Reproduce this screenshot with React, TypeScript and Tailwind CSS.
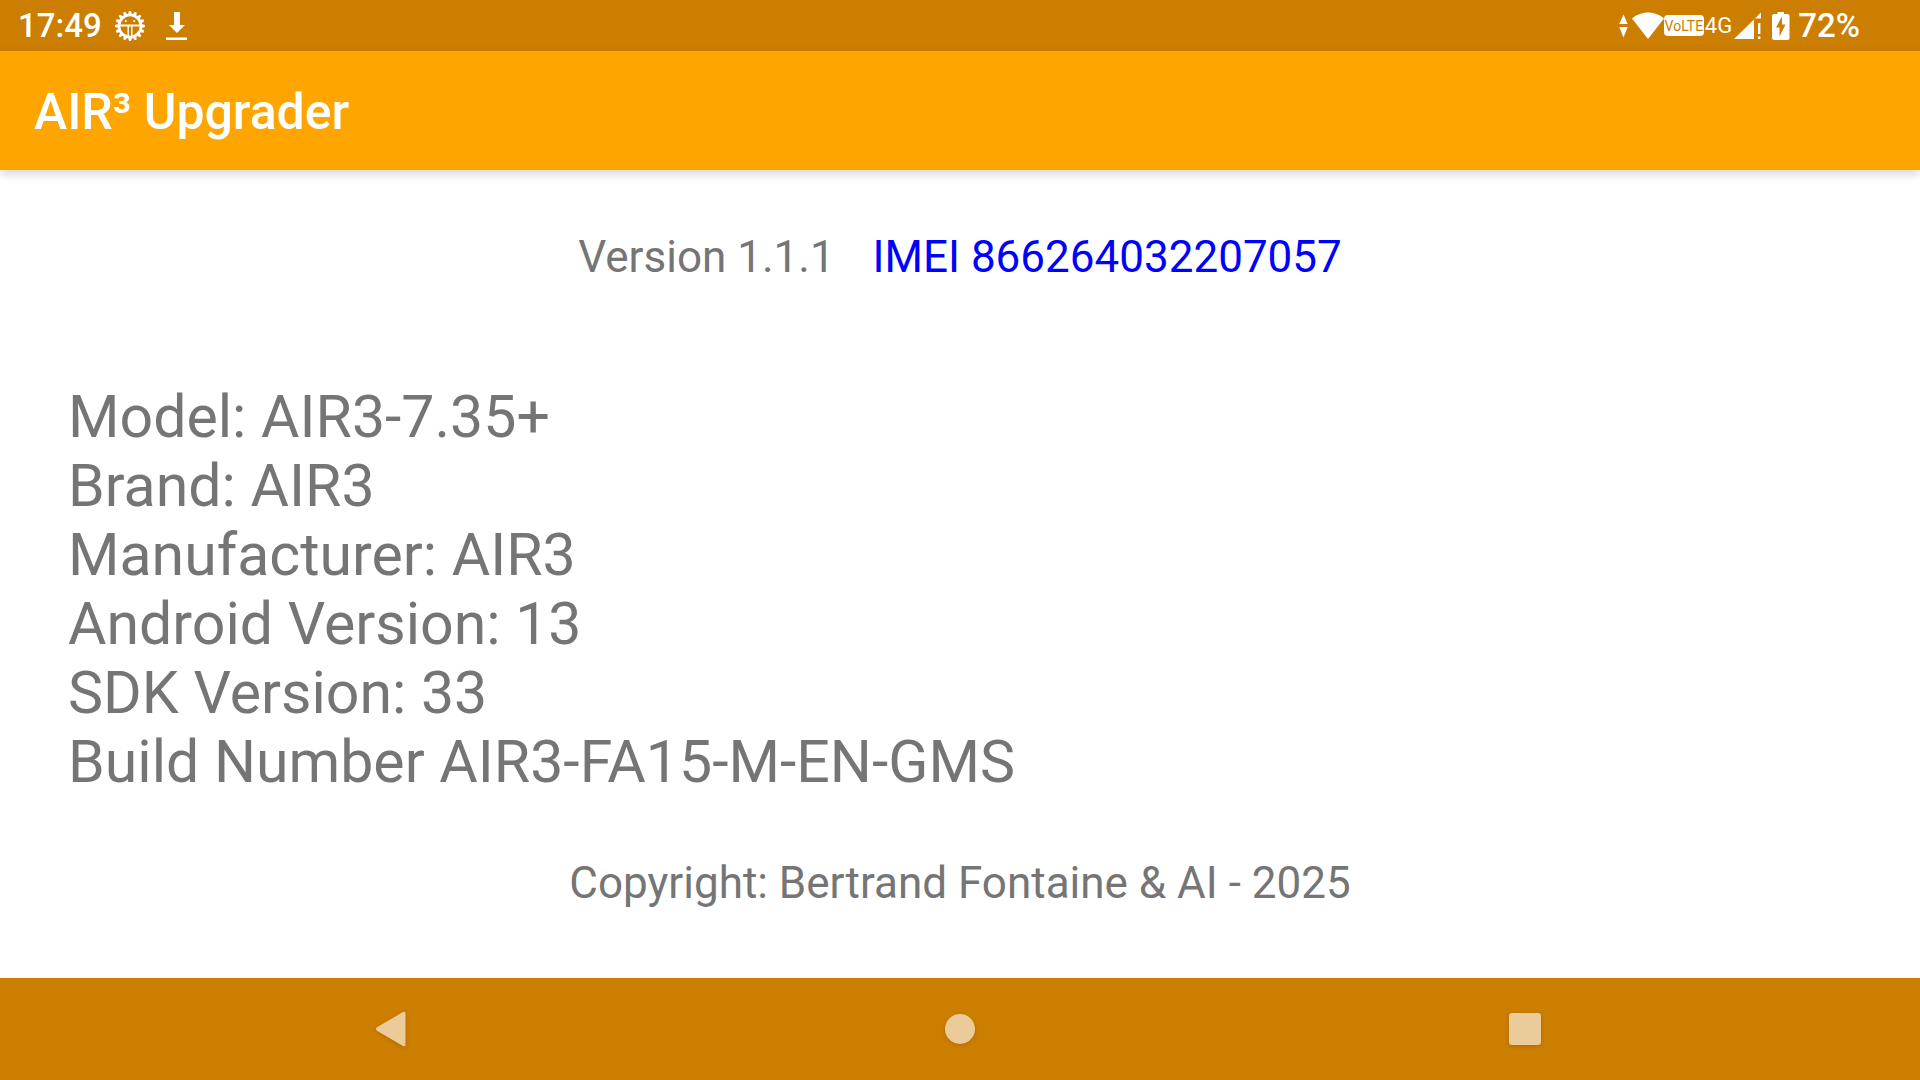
import type { ReactNode } from "react";

interface DeviceField {
  label: string;
  value: string;
}

const deviceFields: DeviceField[] = [
  { label: "Model:", value: "AIR3-7.35+" },
  { label: "Brand:", value: "AIR3" },
  { label: "Manufacturer:", value: "AIR3" },
  { label: "Android Version:", value: "13" },
  { label: "SDK Version:", value: "33" },
  { label: "Build Number", value: "AIR3-FA15-M-EN-GMS" },
];

const gearTeeth = Array.from({ length: 16 }, (_, i) => i * 22.5);

function GearIcon() {
  return (
    <svg width="32" height="32" viewBox="0 0 32 32" fill="none" stroke="white">
      {gearTeeth.map((angle) => (
        <path
          key={angle}
          d="M13.8 5 L15 1 H17 L18.2 5 Z"
          fill="white"
          stroke="none"
          transform={`rotate(${angle} 16 16)`}
        />
      ))}
      <circle cx="16" cy="16" r="11" strokeWidth="2.6" />
      <path d="M5 15.5 H27" strokeWidth="2" />
      <path d="M14.2 16 V27 M17.8 16 V27" strokeWidth="1.4" />
      <circle cx="11.8" cy="11" r="1.1" fill="white" stroke="none" />
      <circle cx="20.2" cy="11" r="1.1" fill="white" stroke="none" />
    </svg>
  );
}

function DownloadIcon() {
  return (
    <svg width="22" height="28" viewBox="0 0 22 28" fill="white">
      <path d="M8 0 H14 V13 H19 L11 21 L3 13 H8 Z" />
      <path d="M0 25.5 H21 V28 H0 Z" />
    </svg>
  );
}

function DataArrowsIcon() {
  return (
    <svg width="9" height="24" viewBox="0 0 9 24" fill="white">
      <path d="M4.5 0.5 L8.7 10 H0.3 Z" />
      <path d="M4.5 23.5 L8.7 13 H0.3 Z" />
    </svg>
  );
}

function WifiIcon() {
  return (
    <svg width="32" height="28" viewBox="0 0 32 28" fill="white">
      <path d="M16 27 L0 6.5 C4 3 10 0.5 16 0.5 C22 0.5 28 3 32 6.5 Z" />
    </svg>
  );
}

function SignalIcon() {
  return (
    <svg width="28" height="28" viewBox="0 0 28 28" fill="white">
      <path d="M0 27 L20 7.5 V27 Z" />
      <path d="M27 0.5 V6.5 H21 Z" />
      <path d="M24 11 H26.4 V22 H24 Z M24 24.5 H26.4 V27 H24 Z" />
    </svg>
  );
}

function BatteryIcon() {
  return (
    <svg width="18" height="28" viewBox="0 0 18 28">
      <path
        d="M5.5 0 H12 V2 H15.5 Q17.5 2 17.5 4 V26 Q17.5 28 15.5 28 H2 Q0 28 0 26 V4 Q0 2 2 2 H5.5 Z"
        fill="white"
      />
      <path d="M10 4.5 L4 15.5 H7.5 V24.5 L13.5 12.5 H10 Z" fill="#CC7E00" />
    </svg>
  );
}

function StatusBar() {
  return (
    <header className="flex h-[51px] items-center justify-between bg-[#CC7E00] pr-[60px] pl-[18px] text-[33px] leading-10 font-medium text-white">
      <div className="flex items-center">
        <span>17:49</span>
        <span className="ml-3">
          <GearIcon />
        </span>
        <span className="ml-5">
          <DownloadIcon />
        </span>
      </div>
      <div className="flex items-center">
        <DataArrowsIcon />
        <span className="ml-1">
          <WifiIcon />
        </span>
        <span className="flex h-[21px] w-10 items-center justify-center rounded bg-white text-[14px] leading-5 font-normal text-[#CC7E00]">
          VoLTE
        </span>
        <span className="ml-px text-[22px] leading-8 font-normal">4G</span>
        <span className="ml-0.5">
          <SignalIcon />
        </span>
        <span className="mr-2 ml-2.5">
          <BatteryIcon />
        </span>
        <span>72%</span>
      </div>
    </header>
  );
}

function NavButton({ label, children }: { label: string; children: ReactNode }) {
  return (
    <button type="button" aria-label={label} className="flex items-center justify-center">
      {children}
    </button>
  );
}

function NavigationBar() {
  return (
    <nav className="grid h-[102px] grid-cols-3 bg-[#CC7E00] px-28">
      <NavButton label="Back">
        <svg width="40" height="40" viewBox="0 0 40 40" className="drop-shadow-sm">
          <path
            d="M1.9 18.3 L28 3 Q30.5 2 30.5 4.5 V35.5 Q30.5 38 28 37 L1.9 21.7 Q0 20 1.9 18.3 Z"
            fill="#EBCB99"
          />
        </svg>
      </NavButton>
      <NavButton label="Home">
        <svg width="40" height="40" viewBox="0 0 40 40" className="drop-shadow-sm">
          <circle cx="20" cy="20" r="15" fill="#EBCB99" />
        </svg>
      </NavButton>
      <NavButton label="Recent apps">
        <svg width="40" height="40" viewBox="0 0 40 40" className="drop-shadow-sm">
          <rect x="4" y="4" width="32" height="32" rx="3" fill="#EBCB99" />
        </svg>
      </NavButton>
    </nav>
  );
}

export default function App() {
  return (
    <div className="flex min-h-screen flex-col bg-white font-[Roboto,sans-serif] text-[#757575]">
      <StatusBar />
      <div className="flex h-[119px] items-center bg-[#FFA500] px-[34px] pt-0.5 shadow-[0_4px_10px_rgba(0,0,0,0.16)]">
        <h1 className="text-[50px] leading-[60px] font-medium text-white">AIR³ Upgrader</h1>
      </div>

      <main className="flex-1 px-[68px] pt-[61px]">
        <div className="flex justify-center gap-[38px] text-[44px] leading-[52px]">
          <p>Version 1.1.1</p>
          <p className="text-[#0000FF]">IMEI 866264032207057</p>
        </div>

        {/* Device details */}
        <ul className="mt-[99px] text-[59px] leading-[69px]">
          {deviceFields.map((field) => (
            <li key={field.label}>
              {field.label} {field.value}
            </li>
          ))}
        </ul>

        <p className="mt-[61px] text-center text-[44px] leading-[52px]">
          Copyright: Bertrand Fontaine &amp; AI - 2025
        </p>
      </main>

      <NavigationBar />
    </div>
  );
}
